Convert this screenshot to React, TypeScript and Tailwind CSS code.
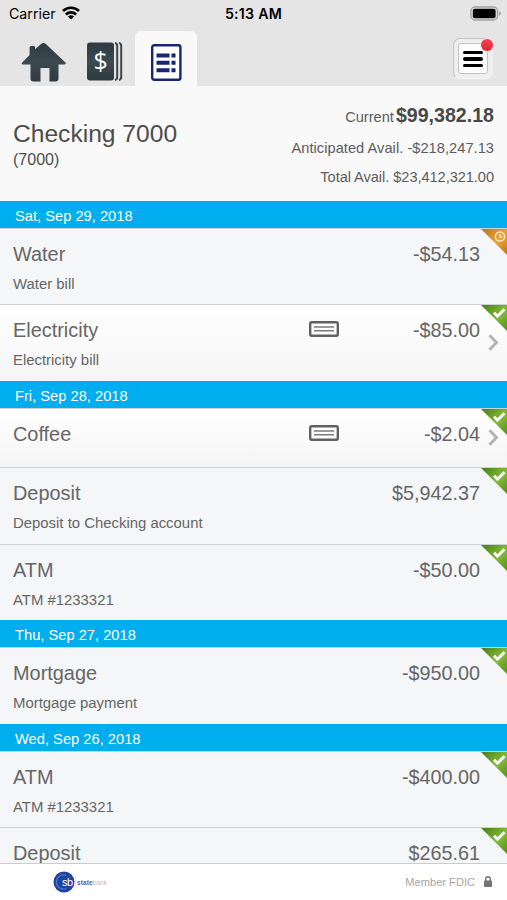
import React from 'react';
import clsx from 'clsx';

type Transaction = {
  title: string;
  memo?: string;
  amount: string;
  height: string;
  pending?: boolean;
  check?: boolean;
};

type Day = {
  date: string;
  height: string;
  items: Transaction[];
};

const days: Day[] = [
  {
    date: 'Sat, Sep 29, 2018',
    height: 'h-[27px]',
    items: [
      { title: 'Water', memo: 'Water bill', amount: '-$54.13', height: 'h-[76px]', pending: true },
      { title: 'Electricity', memo: 'Electricity bill', amount: '-$85.00', height: 'h-[77px]', check: true },
    ],
  },
  {
    date: 'Fri, Sep 28, 2018',
    height: 'h-[27px]',
    items: [
      { title: 'Coffee', amount: '-$2.04', height: 'h-[59px]', check: true },
      { title: 'Deposit', memo: 'Deposit to Checking account', amount: '$5,942.37', height: 'h-[77px]' },
      { title: 'ATM', memo: 'ATM #1233321', amount: '-$50.00', height: 'h-[76px]' },
    ],
  },
  {
    date: 'Thu, Sep 27, 2018',
    height: 'h-[27px]',
    items: [{ title: 'Mortgage', memo: 'Mortgage payment', amount: '-$950.00', height: 'h-[77px]' }],
  },
  {
    date: 'Wed, Sep 26, 2018',
    height: 'h-[27px]',
    items: [
      { title: 'ATM', memo: 'ATM #1233321', amount: '-$400.00', height: 'h-[76px]' },
      { title: 'Deposit', amount: '$265.61', height: 'h-[76px]' },
    ],
  },
];

const WifiIcon = () => (
  <svg className="w-[18px] h-[14px]" viewBox="0 0 18 14" fill="none" stroke="#000" strokeWidth="2.6">
    <path d="M1 5a11.5 11.5 0 0 1 16 0" />
    <path d="M3.9 8.5a7.3 7.3 0 0 1 10.2 0" />
    <path d="M9 13.6 5.9 10.6a4.5 4.5 0 0 1 6.2 0z" fill="#000" stroke="none" />
  </svg>
);

const StatusBar = () => (
  <div className="h-[31px] flex items-center justify-between pl-[9px] pr-[6px] pb-[4px] text-black">
    <div className="w-[130px] flex items-center gap-[6px]">
      <span className="font-['Inter'] text-[14.2px]">Carrier</span>
      <WifiIcon />
    </div>
    <span className="-ml-[3px] font-['Inter'] font-semibold text-[14.2px] tracking-[0.25px]">5:13 AM</span>
    <div className="w-[130px] flex justify-end">
      <svg className="w-[31px] h-[15px]" viewBox="0 0 31 15">
        <rect x="1" y="1" width="26.5" height="13" rx="4" fill="#e5e5e5" stroke="#a3a3a3" strokeWidth="1.4" />
        <rect x="2.8" y="2.8" width="22.8" height="9.4" rx="2" fill="#000" />
        <path d="M28.8 5.2v4.6q2-.6 2-2.3t-2-2.3z" fill="#a3a3a3" />
      </svg>
    </div>
  </div>
);

const HomeIcon = () => (
  <svg className="w-[46px] h-[40px]" viewBox="0 0 46 40">
    <defs>
      <linearGradient id="slate" x1="0" y1="0" x2="0" y2="1">
        <stop offset="0" stopColor="#2f3a41" />
        <stop offset="0.5" stopColor="#3c4a52" />
        <stop offset="1" stopColor="#2e3a40" />
      </linearGradient>
    </defs>
    <path
      d="M22.5 1q1.2 0 2.4 1L44.4 20.5q1.3 1.8-1 2H37.5v14q0 3-3 3H28.5V26h-9V39.5H12.5q-3 0-3-3V22.5H2q-2.2-.2-.8-2L8.6 13V5.5q0-1.5 1.5-1.5h2.5q1.5 0 1.5 1.5v1.7L20.1 2Q21.3 1 22.5 1z"
      fill="url(#slate)"
    />
  </svg>
);

const AccountsIcon = () => (
  <svg className="w-[36px] h-[39px]" viewBox="0 0 36 39">
    <rect x="0" y="0.5" width="27" height="38" rx="3" fill="url(#slate)" />
    <path d="M28 .9q2.2.6 2.2 3v31.2q0 2.400-2.200 3" fill="none" stroke="#3b474e" strokeWidth="2" />
    <path d="M32 .9q2.200.6 2.200 3v31.200q0 2.400-2.200 3" fill="none" stroke="#3b474e" strokeWidth="2" />
    <text x="13.7" y="28" textAnchor="middle" fontSize="25" fontFamily="Open Sans" fill="#fff">$</text>
  </svg>
);

const RegisterIcon = () => (
  <svg className="w-[31px] h-[37px]" viewBox="0 0 31 37">
    <rect x="1.2" y="1.2" width="28.2" height="34.6" rx="2" fill="#fff" stroke="#182474" strokeWidth="2.4" />
    <path d="M5.5 11.4h13M20.5 11.400h4M5.500 18.800h13M20.500 18.800h4M5.500 26.300h13M20.500 26.300h4" stroke="#182474" strokeWidth="4" />
  </svg>
);

const NavBar = () => (
  <nav className="h-[55px] flex items-start justify-between">
    <div className="flex">
      <div className="w-[135px] pt-[11px] pl-[21px] flex gap-[20px]">
        <HomeIcon />
        <AccountsIcon />
      </div>
      <div className="w-[62px] h-[55px] pt-[13px] flex justify-center rounded-t-[6px] bg-[#f9f9f9]">
        <RegisterIcon />
      </div>
    </div>
    <div className="relative w-[40px] h-[41px] mt-[7px] mr-[14px] p-[4px] rounded-[7px] border border-[#c6c6c6] border-r-[#efefef] border-b-[#f5f5f5] bg-[#eeeeee]">
      <div className="h-full pt-[1px] flex flex-col items-center justify-center gap-[3px] rounded-[3px] border border-[#c4c4c4] bg-[#fcfcfc]">
        <span className="w-5 h-[3px] rounded-full bg-black" />
        <span className="w-5 h-[4px] rounded-full bg-black" />
        <span className="w-5 h-[3px] rounded-full bg-black" />
      </div>
      <span className="absolute top-0 right-[-1px] w-3 h-3 rounded-full bg-linear-to-b from-[#ec4458] to-[#e2202f] ring-1 ring-[#f3e3e5]" />
    </div>
  </nav>
);

const Summary = () => (
  <section className="h-[115px] flex justify-between pl-[13px] pr-[13px] text-[#4d4d4d] bg-[#f9f9f9]">
    <div className="pt-[33px]">
      <h1 className="text-[24.6px] leading-[30px]">Checking 7000</h1>
      <p className="pt-[1px] text-[16px] leading-[20px]">(7000)</p>
    </div>
    <div className="pt-[15px] text-right text-[14.6px] text-[#5c5c5c]">
      <p className="leading-[29px]">
        Current <span className="-ml-[2px] text-[19.6px] font-bold text-[#484848]">$99,382.18</span>
      </p>
      <p className="pt-px leading-[30px] tracking-[0.05px]">Anticipated Avail. -$218,247.13</p>
      <p className="leading-[29px] tracking-[-0.05px]">Total Avail. $23,412,321.00</p>
    </div>
  </section>
);

const StatusCorner = ({ pending }: { pending?: boolean }) => (
  <svg className="absolute top-0 right-0 w-[26px] h-[26px]" viewBox="0 0 26 26">
    <defs>
      <linearGradient id="pending" x1="0" y1="0" x2="1" y2="1">
        <stop offset="0.1" stopColor="#c07c22" />
        <stop offset="0.55" stopColor="#eda437" />
        <stop offset="1" stopColor="#bd7617" />
      </linearGradient>
      <linearGradient id="cleared" x1="0" y1="0" x2="1" y2="1">
        <stop offset="0.1" stopColor="#4f861d" />
        <stop offset="0.55" stopColor="#83bb3a" />
        <stop offset="1" stopColor="#568e1b" />
      </linearGradient>
    </defs>
    <path d="M0 0H26V26z" fill={pending ? 'url(#pending)' : 'url(#cleared)'} />
    {pending ? (
      <g fill="none" stroke="#fff3dc" strokeWidth="1.3">
        <circle cx="19" cy="7.5" r="4.6" />
        <path d="M19 4.8V7.900h2.400" />
      </g>
    ) : (
      <path d="M13 7.800l3.500 3.500 7-7" fill="none" stroke="#fff" strokeWidth="2.800" />
    )}
  </svg>
);

const CheckIcon = () => (
  <svg className="w-[30px] h-[16px]" viewBox="0 0 30 16" fill="none" stroke="#606164">
    <rect x="1.2" y="1.2" width="27.6" height="13.6" rx="1.5" fill="#fff" strokeWidth="2.4" />
    <path d="M5 6h20M5 9.7h20" strokeWidth="1.4" stroke="#7b7b7e" />
  </svg>
);

const Chevron = () => (
  <svg className="w-[11px] h-[17px]" viewBox="0 0 11 17" fill="none" stroke="#b3b3b3" strokeWidth="2.9">
    <path d="M1.5 1.2l7 7.3-7 7.3" />
  </svg>
);

const Row = ({ item }: { item: Transaction }) => (
  <li
    className={clsx(
      'relative shrink-0 flex justify-between pl-[13px] pr-[8px] border-t border-[#cfd1d2] text-[#666666]',
      item.height,
      item.check ? 'bg-linear-to-b from-white to-[#f5f5f6]' : 'bg-[#f4f6f8]',
    )}
  >
    <div className="pt-[12px]">
      <h2 className="text-[19.9px] leading-[26px]">{item.title}</h2>
      {item.memo && <p className="pt-[6px] text-[14.9px] leading-[22px]">{item.memo}</p>}
    </div>
    <div className="flex">
      {item.check && (
        <div className="pt-[16px]">
          <CheckIcon />
        </div>
      )}
      <div className="w-[141px] pt-[12px] text-right text-[19.8px] leading-[26px]">{item.amount}</div>
      <div className="w-[19px] pb-[2px] flex items-center justify-end">{item.check && <Chevron />}</div>
    </div>
    <StatusCorner pending={item.pending} />
  </li>
);

const Footer = () => (
  <footer className="h-[37px] shrink-0 flex items-center justify-between pl-[53px] pr-[15px] border-t border-[#cccccc] bg-white">
    <svg className="w-[56px] h-[22px]" viewBox="0 0 56 22">
      <circle cx="11" cy="11" r="10.5" fill="#24419e" />
      <path d="M13 4.5A7 7 0 1 0 13 17.5" fill="none" stroke="#3f7fd0" strokeWidth="1.2" />
      <text x="9" y="14.5" fontSize="11" fontFamily="Liberation Sans" fill="#fff" textLength="11">sb</text>
      <path d="M22.8 5v13" stroke="#d5d7e3" strokeWidth="0.7" />
      <text x="24" y="13.8" fontSize="6.5" fontWeight="bold" fontFamily="Liberation Sans" fill="#6161b3" textLength="15.5">state</text>
      <text x="39.5" y="13.8" fontSize="6.5" fontFamily="Liberation Sans" fill="#b9b9c4" textLength="14.5">bank</text>
    </svg>
    <div className="flex items-center gap-[9px] text-[#a5a5a5] text-[11.1px]">
      <span className="pt-[1px]">Member FDIC</span>
      <svg className="w-2 h-[11px]" viewBox="0 0 8 11">
        <path d="M1.7 5V3a2.3 2.3 0 0 1 4.6 0v2" fill="none" stroke="#747474" strokeWidth="1.4" />
        <rect x="0" y="4.5" width="8" height="6.5" rx="0.8" fill="#747474" />
      </svg>
    </div>
  </footer>
);

export default function App() {
  return (
    <div className="w-[507px] h-[900px] flex flex-col overflow-hidden font-['Liberation_Sans',sans-serif] bg-[#f9f9f9]">
      <header className="bg-[#e5e5e5]">
        <StatusBar />
        <NavBar />
      </header>
      <Summary />
      <main className="flex-1 min-h-0 overflow-hidden">
        {days.map((day) => (
          <section key={day.date}>
            <div className={clsx('flex items-center pl-[15px] pt-[3px] bg-[#00aeef] text-white text-[14.7px]', day.height)}>
              {day.date}
            </div>
            <ul>
              {day.items.map((item) => (
                <Row key={item.title} item={item} />
              ))}
            </ul>
          </section>
        ))}
      </main>
      <Footer />
    </div>
  );
}
